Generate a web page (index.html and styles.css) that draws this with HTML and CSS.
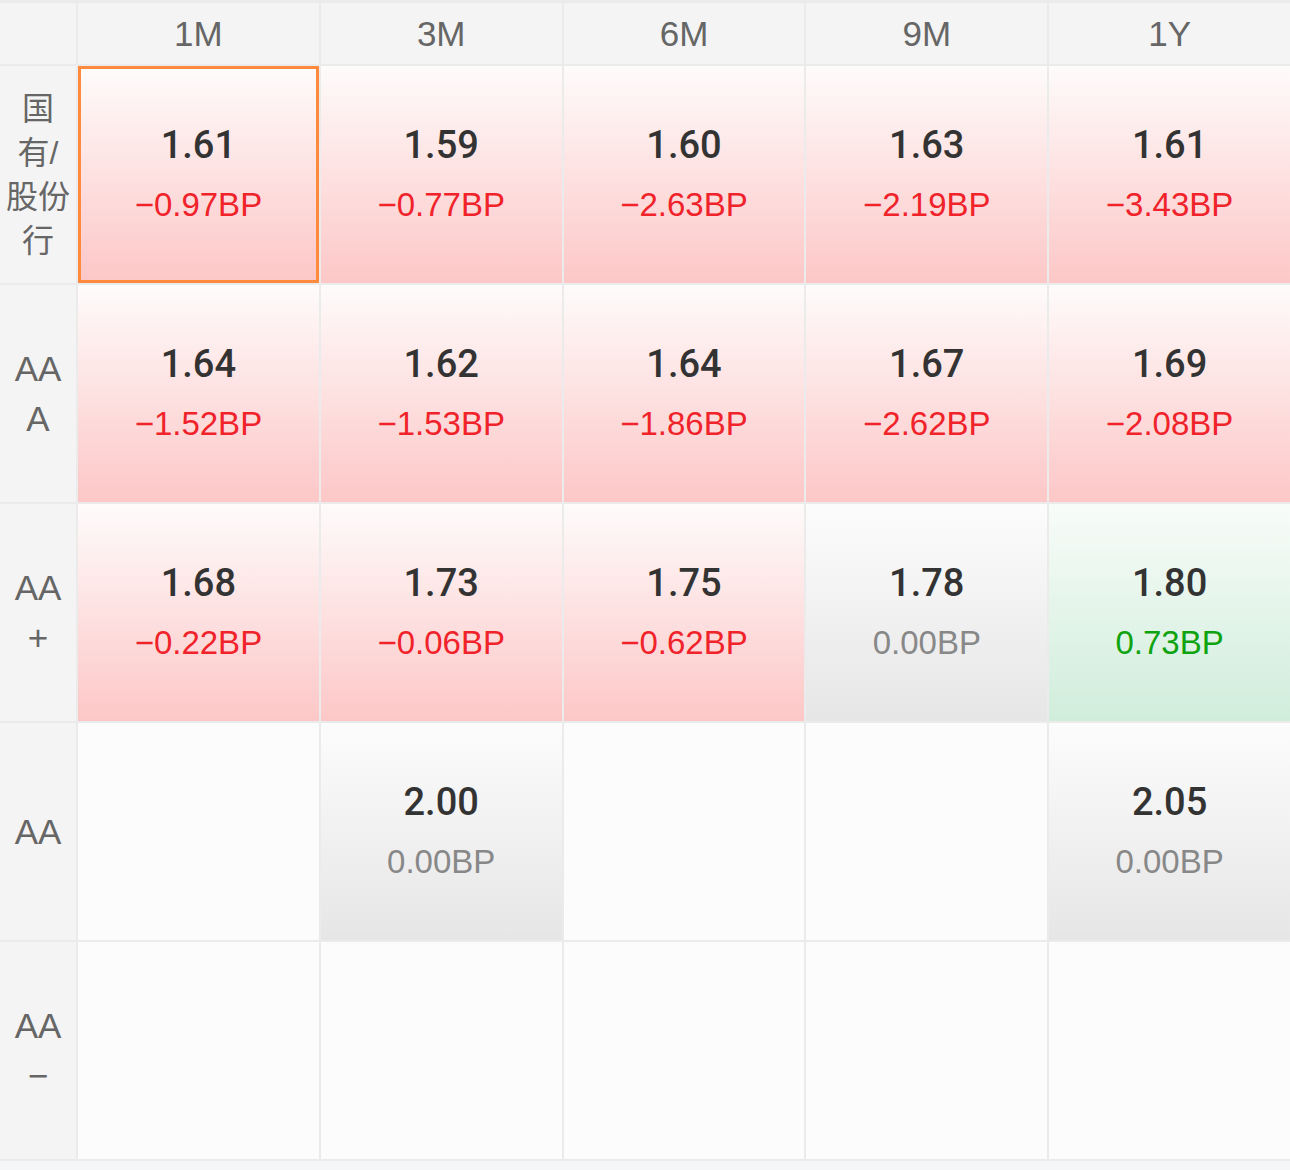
FILE: index.html
```html
<!DOCTYPE html>
<html lang="zh-CN">
<head>
    <meta charset="UTF-8">
    <meta name="viewport" content="width=device-width, initial-scale=1.0">
    <title>存单收益率</title>
    <link rel="stylesheet" href="styles.css">
</head>
<body>
    <div class="grid">
        <!-- 表头 -->
        <div class="head corner"></div>
        <div class="head">1M</div>
        <div class="head">3M</div>
        <div class="head">6M</div>
        <div class="head">9M</div>
        <div class="head">1Y</div>

        <!-- 国有/股份行 -->
        <div class="side">国<br>有/<br>股份<br>行</div>
        <div class="cell down selected"><span class="rate">1.61</span><span class="bp">−0.97BP</span></div>
        <div class="cell down"><span class="rate">1.59</span><span class="bp">−0.77BP</span></div>
        <div class="cell down"><span class="rate">1.60</span><span class="bp">−2.63BP</span></div>
        <div class="cell down"><span class="rate">1.63</span><span class="bp">−2.19BP</span></div>
        <div class="cell down"><span class="rate">1.61</span><span class="bp">−3.43BP</span></div>

        <!-- AAA -->
        <div class="side latin">AA<br>A</div>
        <div class="cell down"><span class="rate">1.64</span><span class="bp">−1.52BP</span></div>
        <div class="cell down"><span class="rate">1.62</span><span class="bp">−1.53BP</span></div>
        <div class="cell down"><span class="rate">1.64</span><span class="bp">−1.86BP</span></div>
        <div class="cell down"><span class="rate">1.67</span><span class="bp">−2.62BP</span></div>
        <div class="cell down"><span class="rate">1.69</span><span class="bp">−2.08BP</span></div>

        <!-- AA+ -->
        <div class="side latin">AA<br>+</div>
        <div class="cell down"><span class="rate">1.68</span><span class="bp">−0.22BP</span></div>
        <div class="cell down"><span class="rate">1.73</span><span class="bp">−0.06BP</span></div>
        <div class="cell down"><span class="rate">1.75</span><span class="bp">−0.62BP</span></div>
        <div class="cell flat"><span class="rate">1.78</span><span class="bp">0.00BP</span></div>
        <div class="cell up"><span class="rate">1.80</span><span class="bp">0.73BP</span></div>

        <!-- AA -->
        <div class="side latin">AA</div>
        <div class="cell"></div>
        <div class="cell flat"><span class="rate">2.00</span><span class="bp">0.00BP</span></div>
        <div class="cell"></div>
        <div class="cell"></div>
        <div class="cell flat"><span class="rate">2.05</span><span class="bp">0.00BP</span></div>

        <!-- AA- -->
        <div class="side latin">AA<br>−</div>
        <div class="cell"></div>
        <div class="cell"></div>
        <div class="cell"></div>
        <div class="cell"></div>
        <div class="cell"></div>
    </div>
</body>
</html>
```

FILE: styles.css
```css
/* Página */
body {
    margin: 0;
    padding: 0;
    background-color: #f5f6f8;
    font-family: "Liberation Sans", "Noto Sans CJK SC", sans-serif;
}

/* Grade principal */
.grid {
    display: grid;
    grid-template-columns: 76px repeat(5, 1fr);
    grid-template-rows: 61px repeat(5, 217px);
    gap: 2px;
    padding: 3px 0 2px;
    background-color: #ebebeb;
}

/* Cabeçalho */
.head {
    background-color: #f4f4f4;
    color: #666;
    font-size: 35px;
    display: flex;
    align-items: center;
    justify-content: center;
}

/* Coluna lateral */
.side {
    background-color: #f4f4f4;
    color: #666;
    font-size: 32px;
    line-height: 44px;
    display: flex;
    align-items: center;
    justify-content: center;
    text-align: center;
}

.side.latin {
    font-size: 35px;
    line-height: 50px;
}

/* Células */
.cell {
    background-color: #fcfcfc;
    display: flex;
    flex-direction: column;
    align-items: center;
    justify-content: center;
    box-sizing: border-box;
}

.cell.down {
    background: linear-gradient(180deg, #fefbfb, #fdc7c7);
}

.cell.flat {
    background: linear-gradient(180deg, #fcfcfc, #e6e6e6);
}

.cell.up {
    background: linear-gradient(180deg, #f8fcf9, #d0eddb);
}

.cell.selected {
    border: 3px solid #ff8a3d;
}

.rate {
    font-family: Roboto, "Liberation Sans", sans-serif;
    font-weight: 500;
    font-size: 38px;
    line-height: 60px;
    color: #333;
}

.bp {
    font-size: 33px;
    line-height: 60px;
    color: #888;
}

.down .bp {
    color: #f0232b;
}

.up .bp {
    color: #0fa30f;
}
```
